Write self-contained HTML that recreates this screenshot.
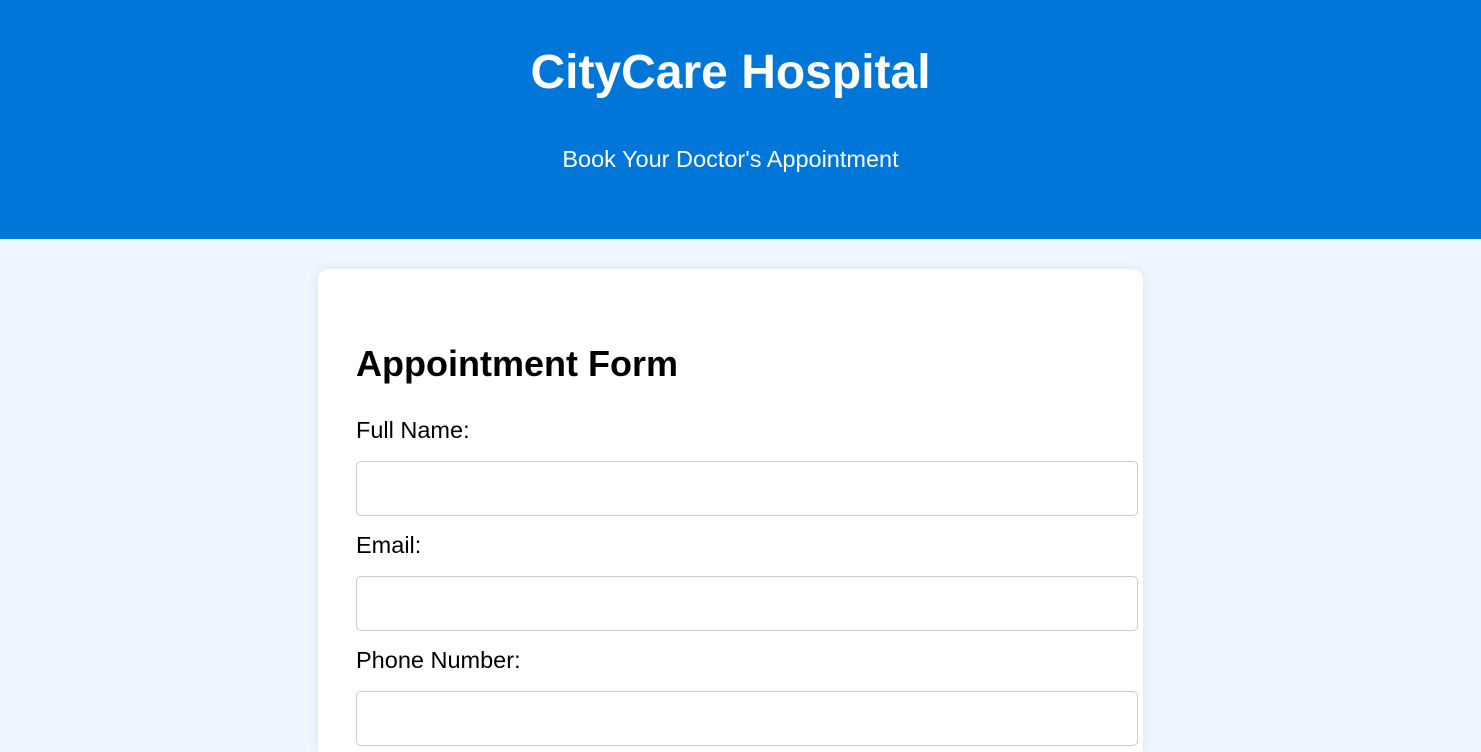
<!DOCTYPE html>
<html style="overflow:hidden"><head><style>
*{box-sizing:content-box}
html,body{height:752px;overflow:hidden}
body{margin:0;background:#eef6ff;font-family:"Liberation Sans",Arial,sans-serif;width:1481px}
header{background:#0077d8;height:239px;color:#fff;text-align:center;position:relative}
header h1{position:absolute;top:45px;left:0;width:1461px;margin:0;font-size:48px;font-weight:bold}
header p{position:absolute;top:146px;left:0;width:1461px;margin:0;font-size:23.5px}
.card{position:absolute;left:318px;top:269px;width:825px;height:483px;background:#fff;border-radius:10px 10px 0 0;box-shadow:0 0 12px rgba(0,0,0,0.08)}
h2{position:absolute;left:38px;top:74px;margin:0;font-size:36px;font-weight:bold;color:#000}
.lbl{position:absolute;left:38px;font-size:23.5px;color:#000}
.inp{position:absolute;left:38px;width:780px;height:53px;border:1px solid #ccc;border-radius:5px;background:#fff}
</style></head><body>
<header><h1>CityCare Hospital</h1><p>Book Your Doctor's Appointment</p></header>
<div class="card">
<h2>Appointment Form</h2>
<div class="lbl" style="top:148px">Full Name:</div>
<div class="inp" style="top:192px"></div>
<div class="lbl" style="top:263px">Email:</div>
<div class="inp" style="top:307px"></div>
<div class="lbl" style="top:378px">Phone Number:</div>
<div class="inp" style="top:422px"></div>
</div>
</body></html>
